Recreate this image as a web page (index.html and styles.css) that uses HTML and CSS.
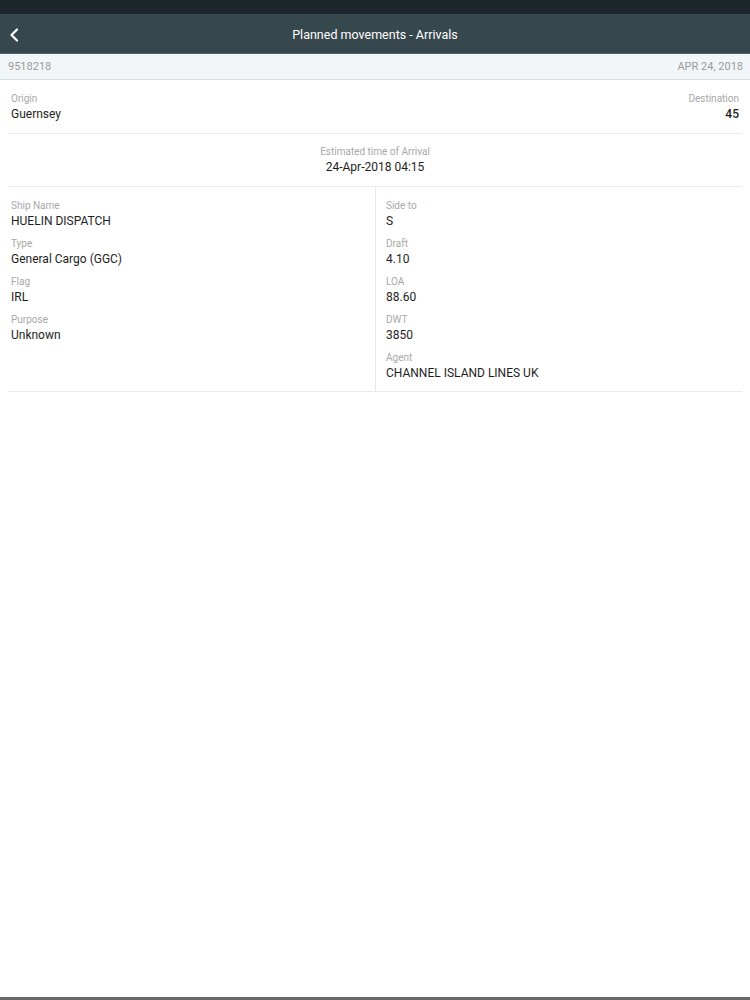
FILE: index.html
```html
<!DOCTYPE html>
<html>
<head>
<meta charset="utf-8">
<link rel="stylesheet" href="styles.css">
</head>
<body>
<div class="app">
  <div class="statusbar"></div>
  <header class="navbar">
    <button class="back" aria-label="Back">
      <svg width="10" height="14" viewBox="0 0 10 14"><path d="M8 1.5 L2.5 7 L8 12.5" fill="none" stroke="#fff" stroke-width="2.2" stroke-linecap="round" stroke-linejoin="round"/></svg>
    </button>
    <h1 class="title">Planned movements - Arrivals</h1>
  </header>
  <div class="subheader">
    <span>9518218</span>
    <span>APR 24, 2018</span>
  </div>
  <main class="content">
    <section class="section route">
      <div class="field">
        <div class="label">Origin</div>
        <div class="value">Guernsey</div>
      </div>
      <div class="field right">
        <div class="label">Destination</div>
        <div class="value">45</div>
      </div>
    </section>
    <section class="section eta">
      <div class="field">
        <div class="label">Estimated time of Arrival</div>
        <div class="value">24-Apr-2018 04:15</div>
      </div>
    </section>
    <section class="details">
      <div class="col">
        <div class="field"><div class="label">Ship Name</div><div class="value">HUELIN DISPATCH</div></div>
        <div class="field"><div class="label">Type</div><div class="value">General Cargo (GGC)</div></div>
        <div class="field"><div class="label">Flag</div><div class="value">IRL</div></div>
        <div class="field"><div class="label">Purpose</div><div class="value">Unknown</div></div>
      </div>
      <div class="col">
        <div class="field"><div class="label">Side to</div><div class="value">S</div></div>
        <div class="field"><div class="label">Draft</div><div class="value">4.10</div></div>
        <div class="field"><div class="label">LOA</div><div class="value">88.60</div></div>
        <div class="field"><div class="label">DWT</div><div class="value">3850</div></div>
        <div class="field"><div class="label">Agent</div><div class="value">CHANNEL ISLAND LINES UK</div></div>
      </div>
    </section>
  </main>
</div>
</body>
</html>
```
FILE: styles.css
```css
* { box-sizing: border-box; }
html, body { margin: 0; padding: 0; }
body {
  font-family: Roboto, "Liberation Sans", Arial, sans-serif;
  background: #fff;
  color: #222;
}
.app {
  height: 1000px;
  display: flex;
  flex-direction: column;
  border-bottom: 3px solid #6a6a6a;
}
.statusbar {
  height: 14px;
  background: #1c262b;
}
.navbar {
  height: 40px;
  background: #37474e;
  display: flex;
  align-items: center;
  justify-content: center;
  position: relative;
  border-bottom: 1px solid #55636a;
}
.back {
  position: absolute;
  left: 9px;
  top: 14px;
  background: none;
  border: 0;
  padding: 0;
  width: 12px;
  height: 14px;
  display: flex;
}
.title {
  margin: 0;
  font-size: 12.5px;
  font-weight: 400;
  color: #fff;
  line-height: 16px;
  padding-top: 3px;
}
.subheader {
  height: 26px;
  background: #f3f6f9;
  border-bottom: 1px solid #dcdfe2;
  display: flex;
  justify-content: space-between;
  align-items: center;
  padding: 0 7px 1px 8px;
  font-size: 11px;
  color: #9a9a9a;
}
.content {
  padding: 0 8px;
  flex: 1;
}
.section {
  border-bottom: 1px solid #ececec;
}
.route {
  display: flex;
  justify-content: space-between;
  padding: 12px 3px 11px;
}
.eta {
  text-align: center;
  padding: 11px 3px 11px;
}
.right { text-align: right; }
.label {
  font-size: 10px;
  line-height: 14px;
  color: #a8a8a8;
}
.value {
  font-size: 12px;
  line-height: 16px;
  color: #1e1e1e;
}
.route .right .value { font-weight: 500; }
.details {
  display: grid;
  grid-template-columns: 367px 1fr;
  border-bottom: 1px solid #ececec;
}
.col {
  display: flex;
  flex-direction: column;
  gap: 8px;
  padding: 12px 3px 10px;
}
.col + .col {
  border-left: 1px solid #e6e6e6;
  padding-left: 10px;
}
```
